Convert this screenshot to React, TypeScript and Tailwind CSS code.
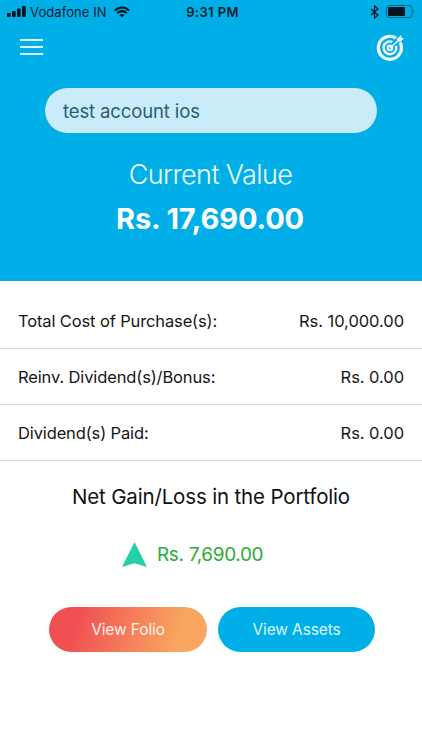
import React from "react";

const rows = [
  { label: "Total Cost of Purchase(s):", value: "Rs. 10,000.00", box: "h-[68px] pt-[14px]" },
  { label: "Reinv. Dividend(s)/Bonus:", value: "Rs. 0.00", box: "h-[56px] pt-[2px]" },
  { label: "Dividend(s) Paid:", value: "Rs. 0.00", box: "h-[56px] pt-[2px]" },
];

function StatusBar() {
  return (
    <div className="grid h-6 grid-cols-3 items-center pl-[7px] pr-[7px] text-[13px] text-[#06202b]">
      <div className="flex items-center">
        <svg className="shrink-0" width="19" height="12" viewBox="0 0 19 12" fill="#04151d">
          <rect x="0" y="7" width="3.700" height="4" rx=".8" />
          <rect x="5" y="5" width="3.700" height="6" rx=".8" />
          <rect x="10" y="2.600" width="3.700" height="8.400" rx=".8" />
          <rect x="15" y="0" width="3.700" height="11" rx=".8" />
        </svg>
        <span className="ml-1 whitespace-nowrap pt-px tracking-[0.08px]">Vodafone IN</span>
        <svg className="ml-[7px] shrink-0" width="16" height="12" viewBox="0 0 16 12" fill="none" stroke="#04151d" strokeWidth="2.1">
          <path d="M.8 4.500C5 .4 11 .4 15.200 4.500" />
          <path d="M3.300 7C6 4.500 10 4.500 12.700 7" />
          <path d="M8 11.500 5.400 8.900Q8 7 10.600 8.900Z" fill="#04151d" stroke="none" />
        </svg>
      </div>
      <div className="pl-[3px] pt-px text-center font-semibold tracking-[0.4px]">9:31 PM</div>
      <div className="mb-px flex items-center justify-end gap-[7px]">
        <svg width="9" height="14" viewBox="0 0 9 14" fill="none" stroke="#04151d" strokeWidth="1.2">
          <path d="M1 4 8 10 4.500 13V1L8 4 1 10" />
        </svg>
        <svg width="29" height="13" viewBox="0 0 29 13">
          <rect x=".5" y=".5" width="25.500" height="12" rx="3" fill="none" stroke="#075f7c" />
          <rect x="2" y="2" width="17" height="9" rx="1" fill="#04151d" />
          <path d="M27.300 4.500Q29.300 6.500 27.300 8.500Z" fill="#075f7c" />
        </svg>
      </div>
    </div>
  );
}

function TargetIcon() {
  return (
    <svg width="30" height="30" viewBox="0 0 30 30" fill="none" stroke="#f2fcff">
      <path d="M21 7.100A11.500 11.500 0 1 0 24.900 11.200" strokeWidth="3.200" />
      <path d="M17.400 10.900A6.400 6.400 0 1 0 21 14.800" strokeWidth="2.400" />
      <circle cx="14.900" cy="16.900" r="2.200" strokeWidth="2.200" />
      <path d="M15 17 25 8" strokeWidth="1.600" />
      <path d="M21.800 8 26.100 4 26.400 6.700 29 7.200 25.300 10.700 22.500 10.300Z" fill="#f2fcff" stroke="none" />
    </svg>
  );
}

export default function App() {
  return (
    <div className="flex h-[750px] w-full flex-col overflow-hidden bg-white font-['Inter',sans-serif] text-[#161616]">
      <header className="flex h-[281px] shrink-0 flex-col bg-[#01afe8]">
        <StatusBar />
        <div className="flex h-[64px] justify-between pl-5 pr-[17px]">
          <button aria-label="Menu" className="mt-[15px] flex h-4 w-[23px] flex-col justify-between">
            <span className="h-[2px] w-full bg-[#e6f9ff]" />
            <span className="h-[2px] w-full bg-[#e6f9ff]" />
            <span className="h-[2px] w-full bg-[#e6f9ff]" />
          </button>
          <button aria-label="Goals" className="mt-[7px] h-[30px]">
            <TargetIcon />
          </button>
        </div>
        <div className="mx-[45px] flex h-[45px] items-center rounded-full bg-[#caebf8] pl-[18px] pt-[2px] text-[18.5px] tracking-[-0.12px] text-[#285f78]">
          test account ios
        </div>
        <div className="mt-[24px] pr-px text-center text-[27px] font-[350] leading-9 tracking-[-0.6px] text-[#f0fbff]">Current Value</div>
        <div className="mt-[8px] pr-[2px] text-center text-[29px] font-bold leading-9 tracking-[-0.15px] text-white">Rs. 17,690.00</div>
      </header>
      <section className="shrink-0">
        {rows.map((row) => (
          <div key={row.label} className={`flex items-center justify-between border-b border-[#d4d4d4] px-[18px] text-[16.5px] tracking-[-0.13px] ${row.box}`}>
            <span>{row.label}</span>
            <span className="tracking-[-0.06px]">{row.value}</span>
          </div>
        ))}
      </section>
      <h2 className="mt-[21px] text-center text-[20.5px] leading-[30px] tracking-[-0.16px] text-[#111]">Net Gain/Loss in the Portfolio</h2>
      <div className="mt-[27px] flex h-[30px] items-center pl-[121px] text-[19px] tracking-[-0.36px] text-[#2aad35]">
        <svg width="27" height="27" viewBox="0 0 27 27" fill="#24d0a8">
          <path d="M13.500 1 26 26 13.500 22.300 1 26Z" />
        </svg>
        <span className="ml-[9px] pt-[3px]">Rs. 7,690.00</span>
      </div>
      <div className="mt-[38px] flex gap-[11px] pl-[49px] text-[15.5px] tracking-[-0.12px] text-[#fff3ee]">
        <button className="h-[45px] w-[158px] rounded-full bg-[linear-gradient(105deg,#f05053_18%,#f9a760_82%)] pt-px">View Folio</button>
        <button className="h-[45px] w-[157px] rounded-full bg-[#01afe8] pt-px text-[#dcf6ff]">View Assets</button>
      </div>
    </div>
  );
}
